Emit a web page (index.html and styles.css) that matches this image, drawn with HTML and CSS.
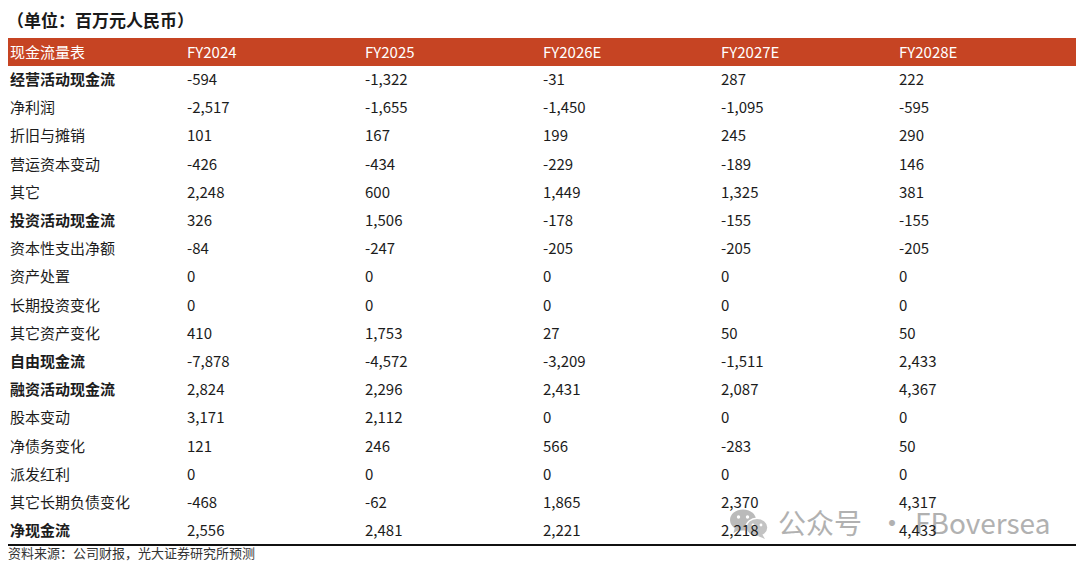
FILE: index.html
```html
<!DOCTYPE html>
<html lang="zh">
<head>
<meta charset="utf-8">
<link rel="stylesheet" href="styles.css">
</head>
<body>
<div class="page">
  <div class="title">（单位：百万元人民币）</div>
  <table class="cf">
    <colgroup>
      <col class="c0"><col class="cn"><col class="cn"><col class="cn"><col class="cn"><col class="cl">
    </colgroup>
    <thead>
      <tr><th>现金流量表</th><th>FY2024</th><th>FY2025</th><th>FY2026E</th><th>FY2027E</th><th>FY2028E</th></tr>
    </thead>
    <tbody>
      <tr class="b"><td>经营活动现金流</td><td>-594</td><td>-1,322</td><td>-31</td><td>287</td><td>222</td></tr>
      <tr><td>净利润</td><td>-2,517</td><td>-1,655</td><td>-1,450</td><td>-1,095</td><td>-595</td></tr>
      <tr><td>折旧与摊销</td><td>101</td><td>167</td><td>199</td><td>245</td><td>290</td></tr>
      <tr><td>营运资本变动</td><td>-426</td><td>-434</td><td>-229</td><td>-189</td><td>146</td></tr>
      <tr><td>其它</td><td>2,248</td><td>600</td><td>1,449</td><td>1,325</td><td>381</td></tr>
      <tr class="b"><td>投资活动现金流</td><td>326</td><td>1,506</td><td>-178</td><td>-155</td><td>-155</td></tr>
      <tr><td>资本性支出净额</td><td>-84</td><td>-247</td><td>-205</td><td>-205</td><td>-205</td></tr>
      <tr><td>资产处置</td><td>0</td><td>0</td><td>0</td><td>0</td><td>0</td></tr>
      <tr><td>长期投资变化</td><td>0</td><td>0</td><td>0</td><td>0</td><td>0</td></tr>
      <tr><td>其它资产变化</td><td>410</td><td>1,753</td><td>27</td><td>50</td><td>50</td></tr>
      <tr class="b"><td>自由现金流</td><td>-7,878</td><td>-4,572</td><td>-3,209</td><td>-1,511</td><td>2,433</td></tr>
      <tr class="b"><td>融资活动现金流</td><td>2,824</td><td>2,296</td><td>2,431</td><td>2,087</td><td>4,367</td></tr>
      <tr><td>股本变动</td><td>3,171</td><td>2,112</td><td>0</td><td>0</td><td>0</td></tr>
      <tr><td>净债务变化</td><td>121</td><td>246</td><td>566</td><td>-283</td><td>50</td></tr>
      <tr><td>派发红利</td><td>0</td><td>0</td><td>0</td><td>0</td><td>0</td></tr>
      <tr><td>其它长期负债变化</td><td>-468</td><td>-62</td><td>1,865</td><td>2,370</td><td>4,317</td></tr>
      <tr class="b last"><td>净现金流</td><td>2,556</td><td>2,481</td><td>2,221</td><td>2,218</td><td>4,433</td></tr>
    </tbody>
  </table>
  <div class="source">资料来源：公司财报，光大证券研究所预测</div>
  <div class="watermark">
    <svg class="wx" width="38" height="30" viewBox="0 0 38 30">
      <ellipse cx="13" cy="11" rx="13" ry="10.5" fill="#b3b3b3"/>
      <path d="M5 18 L3.5 24 L11 20 Z" fill="#b3b3b3"/>
      <ellipse cx="27" cy="18.5" rx="11" ry="9.2" fill="#bdbdbd" stroke="#ffffff" stroke-width="1.5"/>
      <path d="M32 25 L35 30 L28 27 Z" fill="#bdbdbd"/>
      <circle cx="8.5" cy="8" r="1.7" fill="#ffffff"/>
      <circle cx="17.5" cy="8" r="1.7" fill="#ffffff"/>
      <circle cx="23" cy="16" r="1.4" fill="#ffffff"/>
      <circle cx="31" cy="16" r="1.4" fill="#ffffff"/>
    </svg>
    <span class="wm-text wm-cn">公众号</span>
    <span class="wm-text wm-dot">·</span>
    <span class="wm-text wm-en">FBoversea</span>
  </div>
</div>
</body>
</html>
```

FILE: styles.css
```css
html, body {
  margin: 0;
  padding: 0;
  background: #ffffff;
}
body {
  font-family: "Noto Sans CJK SC", "Noto Sans", sans-serif;
  color: #1c1c1c;
}
.page {
  position: relative;
  width: 1080px;
  height: 566px;
  padding: 8px 4px 0 8px;
  box-sizing: border-box;
}
.title {
  font-size: 17px;
  font-weight: 700;
  line-height: 24px;
  height: 24px;
  margin-left: -1px;
  color: #1a1a1a;
}
.cf {
  position: relative;
  z-index: 1;
  margin-top: 6px;
  border-collapse: collapse;
  table-layout: fixed;
  width: 1068px;
  font-size: 15px;
}
.c0 { width: 179px; }
.cn { width: 178px; }
.cl { width: 177px; }
.cf th,
.cf td {
  padding: 0;
  text-align: left;
  white-space: nowrap;
  vertical-align: middle;
}
.cf th:first-child,
.cf td:first-child {
  padding-left: 2px;
}
.cf thead th {
  background: #c64423;
  color: #ffffff;
  font-weight: 400;
  height: 28px;
  line-height: 28px;
}
.cf tbody td {
  height: 28.2px;
  line-height: 20px;
  padding-bottom: 2px;
  box-sizing: border-box;
}
.cf tbody tr.b td:first-child {
  font-weight: 700;
}
.cf tbody tr.last td {
  border-bottom: 2px solid #111111;
}
.source {
  font-size: 13px;
  line-height: 14px;
  margin-top: 0;
  color: #333333;
}
.watermark {
  position: absolute;
  z-index: 0;
  left: 730px;
  top: 505px;
  display: flex;
  align-items: center;
  opacity: 0.9;
}
.wx {
  margin-top: 3px;
  margin-right: 10px;
}
.wm-text {
  font-family: "Noto Sans CJK SC", "Noto Sans", sans-serif;
  font-size: 28px;
  line-height: 34px;
  color: #a9a9a9;
}
.wm-dot {
  margin-left: 16px;
  margin-right: 9px;
}
```
